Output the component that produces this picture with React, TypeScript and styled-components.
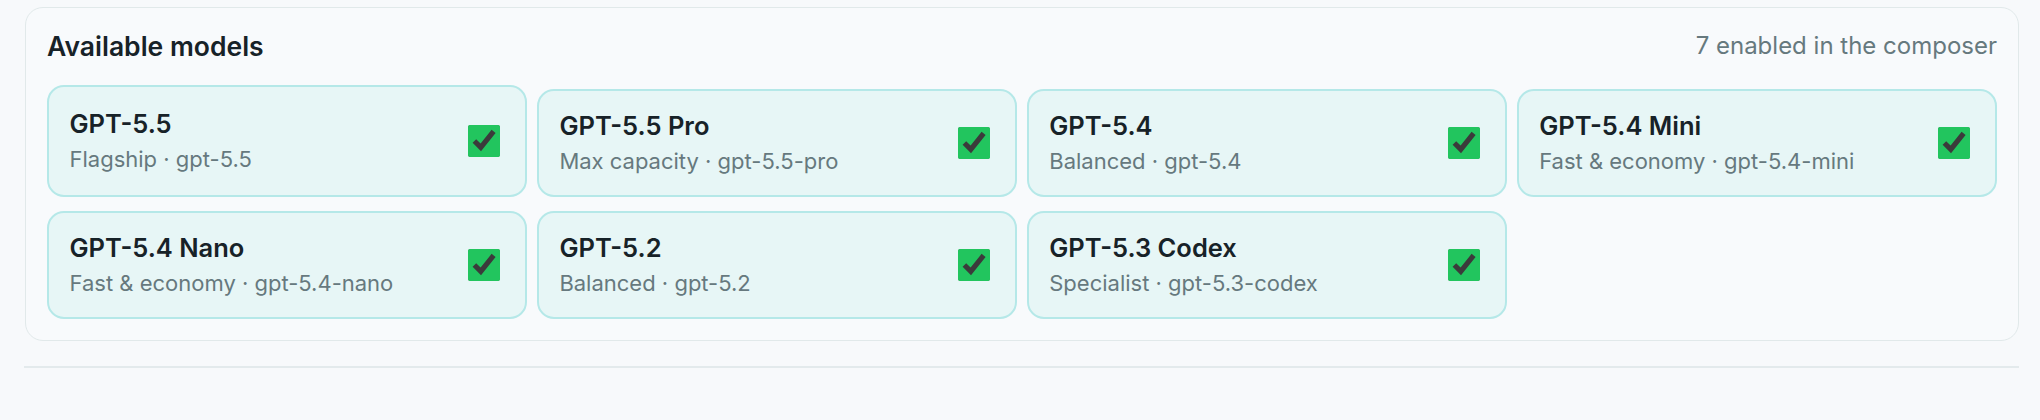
import React from 'react'
import styled, { createGlobalStyle } from 'styled-components'

type Model = {
  id: string
  name: string
  tier: string
  enabled: boolean
}

const models: Model[] = [
  { id: 'gpt-5.5', name: 'GPT-5.5', tier: 'Flagship', enabled: true },
  { id: 'gpt-5.5-pro', name: 'GPT-5.5 Pro', tier: 'Max capacity', enabled: true },
  { id: 'gpt-5.4', name: 'GPT-5.4', tier: 'Balanced', enabled: true },
  { id: 'gpt-5.4-mini', name: 'GPT-5.4 Mini', tier: 'Fast & economy', enabled: true },
  { id: 'gpt-5.4-nano', name: 'GPT-5.4 Nano', tier: 'Fast & economy', enabled: true },
  { id: 'gpt-5.2', name: 'GPT-5.2', tier: 'Balanced', enabled: true },
  { id: 'gpt-5.3-codex', name: 'GPT-5.3 Codex', tier: 'Specialist', enabled: true },
]

const GlobalStyle = createGlobalStyle`
  body {
    margin: 0;
    background: #f7f9fb;
    font-family: Inter, "Noto Sans", "Liberation Sans", sans-serif;
    color: #172228;
  }
`

const Page = styled.div`
  padding: 7px 21px 0 25px;
`

const Panel = styled.section`
  border: 1px solid #e1e9ea;
  border-radius: 18px;
  background: #f8fafc;
  padding: 22px 21px 21px;
`

const Header = styled.div`
  display: flex;
  align-items: center;
  justify-content: space-between;
  margin-bottom: 23px;

  h2 {
    margin: 0;
    font-size: 26.5px;
    line-height: 32px;
    font-weight: 600;
    color: #172228;
  }

  span {
    font-size: 24px;
    line-height: 32px;
    color: #66797e;
  }
`

const Grid = styled.div`
  display: grid;
  grid-template-columns: repeat(4, 1fr);
  column-gap: 9.5px;
  row-gap: 14px;
  align-items: end;
`

const Card = styled.label<{ $raised?: boolean }>`
  display: flex;
  align-items: center;
  justify-content: space-between;
  box-sizing: border-box;
  height: ${({ $raised }) => ($raised ? 112 : 108)}px;
  padding: 0 20px 0 20.5px;
  border: 2px solid #b5e8e8;
  border-radius: 17px;
  background: #e7f6f6;
  cursor: pointer;

  input {
    width: 32px;
    height: 32px;
    margin: 0 5px 0 0;
    accent-color: #22c55e;
    flex-shrink: 0;
  }
`

const Info = styled.div`
  display: flex;
  flex-direction: column;
  gap: 6px;

  strong {
    font-size: 25.5px;
    line-height: 30px;
    font-weight: 600;
    color: #172228;
  }

  small {
    font-size: 22px;
    line-height: 28px;
    color: #66797e;
  }
`

const Divider = styled.hr`
  margin: 25px 0 0 -1px;
  border: none;
  height: 2px;
  background: #e3eaec;
`

const App = () => {
  const enabledCount = models.filter((m) => m.enabled).length

  return (
    <Page>
      <GlobalStyle />
      <Panel>
        <Header>
          <h2>Available models</h2>
          <span>{enabledCount} enabled in the composer</span>
        </Header>
        <Grid>
          {models.map((model, i) => (
            <Card key={model.id} $raised={i === 0}>
              <Info>
                <strong>{model.name}</strong>
                <small>
                  {model.tier} · {model.id}
                </small>
              </Info>
              <input type="checkbox" checked={model.enabled} readOnly />
            </Card>
          ))}
        </Grid>
      </Panel>
      <Divider />
    </Page>
  )
}

export default App
